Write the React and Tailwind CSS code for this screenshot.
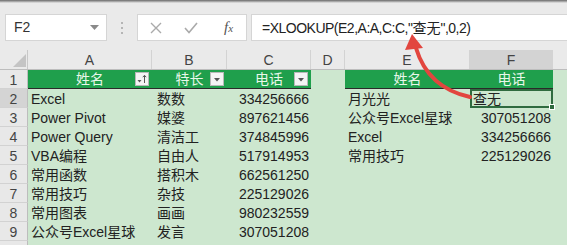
const FONT = { fontFamily: '"Liberation Sans", "Noto Sans CJK SC", sans-serif' }

const COLS = [
  { key: 'A', w: 'w-[124px]' },
  { key: 'B', w: 'w-[75px]' },
  { key: 'C', w: 'w-[84px]' },
  { key: 'D', w: 'w-[34px]' },
  { key: 'E', w: 'w-[125px]' },
  { key: 'F', w: 'w-[83px]' },
  { key: '', w: 'w-[14px]' },
]

const data = [
  ['Excel', '数数', '334256666'],
  ['Power Pivot', '媒婆', '897621456'],
  ['Power Query', '清洁工', '374845996'],
  ['VBA编程', '自由人', '517914953'],
  ['常用函数', '搭积木', '662561250'],
  ['常用技巧', '杂技', '225129026'],
  ['常用图表', '画画', '980232559'],
  ['公众号Excel星球', '发言', '307051208'],
]

const lookup = [
  ['月光光', '查无'],
  ['公众号Excel星球', '307051208'],
  ['Excel', '334256666'],
  ['常用技巧', '225129026'],
]

// ─── Small pieces ─────────────────────────────────────────────────────────────

function FilterBtn({ sorted }) {
  return (
    <div className="absolute right-[3px] top-[2px] w-[14px] h-[14px] bg-[#f4f4f4] border border-[#b8b8b8] flex items-center justify-center">
      <svg width="12" height="12" viewBox="0 0 12 12">
        {sorted ? (
          <>
            <polygon points="1.5,7 5.5,7 3.5,9.5" fill="#555" />
            <line x1="8.5" y1="2.5" x2="8.5" y2="10" stroke="#555" strokeWidth="1" />
            <polyline points="6.8,4.2 8.5,2.3 10.2,4.2" fill="none" stroke="#555" strokeWidth="1" />
          </>
        ) : (
          <polygon points="3,5 9,5 6,8.5" fill="#555" />
        )}
      </svg>
    </div>
  )
}

function RowHead({ n, active }) {
  return (
    <div
      className={`w-[28px] h-full flex items-center justify-center border-r border-b border-r-[#bdbdbd] border-b-[#d2d2d2] text-[14px] text-[#444] pt-[2px] ${
        active ? 'bg-[#d4d4d4]' : 'bg-[#e8e8e8]'
      }`}
    >
      {n}
    </div>
  )
}

function Cell({ w, children, right, className = '' }) {
  return (
    <div
      className={`${w} h-full flex items-center pt-[2px] text-[14px] text-[#222] whitespace-nowrap overflow-visible ${
        right ? 'justify-end pr-[2px]' : 'pl-[3px]'
      } ${className}`}
    >
      {children}
    </div>
  )
}

// ─── Formula bar ──────────────────────────────────────────────────────────────

function FormulaBar() {
  return (
    <div className="flex h-[27px] mt-[11px]">
      <div className="ml-[5px] w-[102px] h-full bg-white border border-[#d5d5d5] flex items-center justify-between pl-[8px] pr-[7px] text-[14px] text-[#333]">
        <span>F2</span>
        <svg width="9" height="6" viewBox="0 0 9 6">
          <polygon points="0,0 9,0 4.5,5" fill="#8a8a8a" />
        </svg>
      </div>
      <div className="w-[30px] flex flex-col items-center justify-center gap-[3px]">
        <span className="w-[2px] h-[2px] bg-[#b5b5b5]" />
        <span className="w-[2px] h-[2px] bg-[#b5b5b5]" />
        <span className="w-[2px] h-[2px] bg-[#b5b5b5]" />
      </div>
      <div className="w-[110px] h-full bg-white border border-[#d5d5d5] flex items-center">
        <svg className="ml-[12px]" width="12" height="12" viewBox="0 0 12 12">
          <path d="M1 1 L11 11 M11 1 L1 11" stroke="#aaa" strokeWidth="1.4" />
        </svg>
        <svg className="ml-[22px]" width="14" height="12" viewBox="0 0 14 12">
          <polyline points="1,6 5,10.5 13,1" fill="none" stroke="#aaa" strokeWidth="1.6" />
        </svg>
        <span
          className="ml-[26px] italic text-[15px] text-[#555]"
          style={{ fontFamily: '"Liberation Serif", serif' }}
        >
          f<span className="text-[11px]">x</span>
        </span>
      </div>
      <div className="ml-[4px] flex-1 h-full bg-white border border-r-0 border-[#d5d5d5] flex items-center pl-[10px] pt-[1px] text-[14px] tracking-[-0.5px] text-[#222] whitespace-nowrap">
        =XLOOKUP(E2,A:A,C:C,"<span className="tracking-normal">查无</span>",0,2)
      </div>
    </div>
  )
}

// ─── Sheet ────────────────────────────────────────────────────────────────────

function ColumnHeaders() {
  return (
    <div className="flex h-[20px] mt-[9px] border-b border-[#bdbdbd]">
      <div className="w-[28px] h-full border-r border-[#c8c8c8] relative">
        <svg className="absolute left-0 top-0" width="28" height="20" viewBox="0 0 28 20">
          <polygon points="13,17 26,17 26,4" fill="#c4c4c4" />
        </svg>
      </div>
      {COLS.map((c) => (
        <div
          key={c.key || 'g'}
          className={`${c.w} h-full flex items-center justify-center text-[14px] text-[#444] pt-[2px] ${
            c.key ? 'border-r border-[#d3d3d3]' : ''
          } ${c.key === 'F' ? 'bg-[#d3d3d3]' : ''}`}
        >
          {c.key}
        </div>
      ))}
    </div>
  )
}

function HeaderRow() {
  const green = 'h-full bg-[#1f9f4c] text-[#e9f7ea] text-[14px] flex items-center justify-center relative pt-[1px] border-b border-[#2a2a2a]'
  return (
    <div className="flex h-[19px]">
      <RowHead n="1" />
      <div className={`w-[124px] ${green}`}>
        姓名
        <FilterBtn sorted />
      </div>
      <div className={`w-[75px] ${green}`}>
        特长
        <FilterBtn />
      </div>
      <div className={`w-[84px] ${green}`}>
        电话
        <FilterBtn />
      </div>
      <div className="w-[34px] h-full" />
      <div className={`w-[125px] ${green}`}>姓名</div>
      <div className={`w-[83px] ${green}`}>电话</div>
    </div>
  )
}

function DataRow({ i, row }) {
  const lk = lookup[i]
  const isNum = lk && /^\d+$/.test(lk[1])
  return (
    <div className="flex h-[19px]">
      <RowHead n={i + 2} active={i === 0} />
      <Cell w="w-[124px]">{row[0]}</Cell>
      <Cell w="w-[75px]" className="pl-[5px]">{row[1]}</Cell>
      <Cell w="w-[84px]" right>{row[2]}</Cell>
      <div className="w-[34px]" />
      <Cell w="w-[125px]">{lk ? lk[0] : ''}</Cell>
      {i === 0 ? (
        <div className="w-[83px] h-full relative border-2 border-[#2f6b3f] flex items-center pl-[1px] pt-[1px] text-[14px] text-[#222]">
          {lk[1]}
          <span className="absolute -right-[4px] -bottom-[4px] w-[6px] h-[6px] bg-[#2f6b3f] border border-white" />
        </div>
      ) : (
        <Cell w="w-[83px]" right={isNum}>{lk ? lk[1] : ''}</Cell>
      )}
    </div>
  )
}

// ─── Page ─────────────────────────────────────────────────────────────────────

export default function App() {
  return (
    <div className="w-[567px] h-[245px] overflow-hidden bg-[#eaeaea] relative" style={FONT}>
      <div className="h-[3px] bg-gradient-to-b from-[#6a6a6a] to-[#eaeaea]" />
      <FormulaBar />
      <ColumnHeaders />
      <div className="bg-[#cde7cf]">
        <HeaderRow />
        {data.map((row, i) => (
          <DataRow key={i} i={i} row={row} />
        ))}
        {/* partial row 10, label cut off by the window edge */}
        <div className="flex h-[19px]">
          <RowHead n="" />
        </div>
      </div>

      {/* Red callout arrow */}
      <svg className="absolute left-0 top-0 pointer-events-none" width="567" height="245" viewBox="0 0 567 245">
        <path d="M470 97 Q 428 88 416 48" fill="none" stroke="#e2463f" strokeWidth="4" strokeLinecap="round" />
        <polygon points="412,34 405,50 423,48" fill="#e2463f" />
      </svg>
    </div>
  )
}
